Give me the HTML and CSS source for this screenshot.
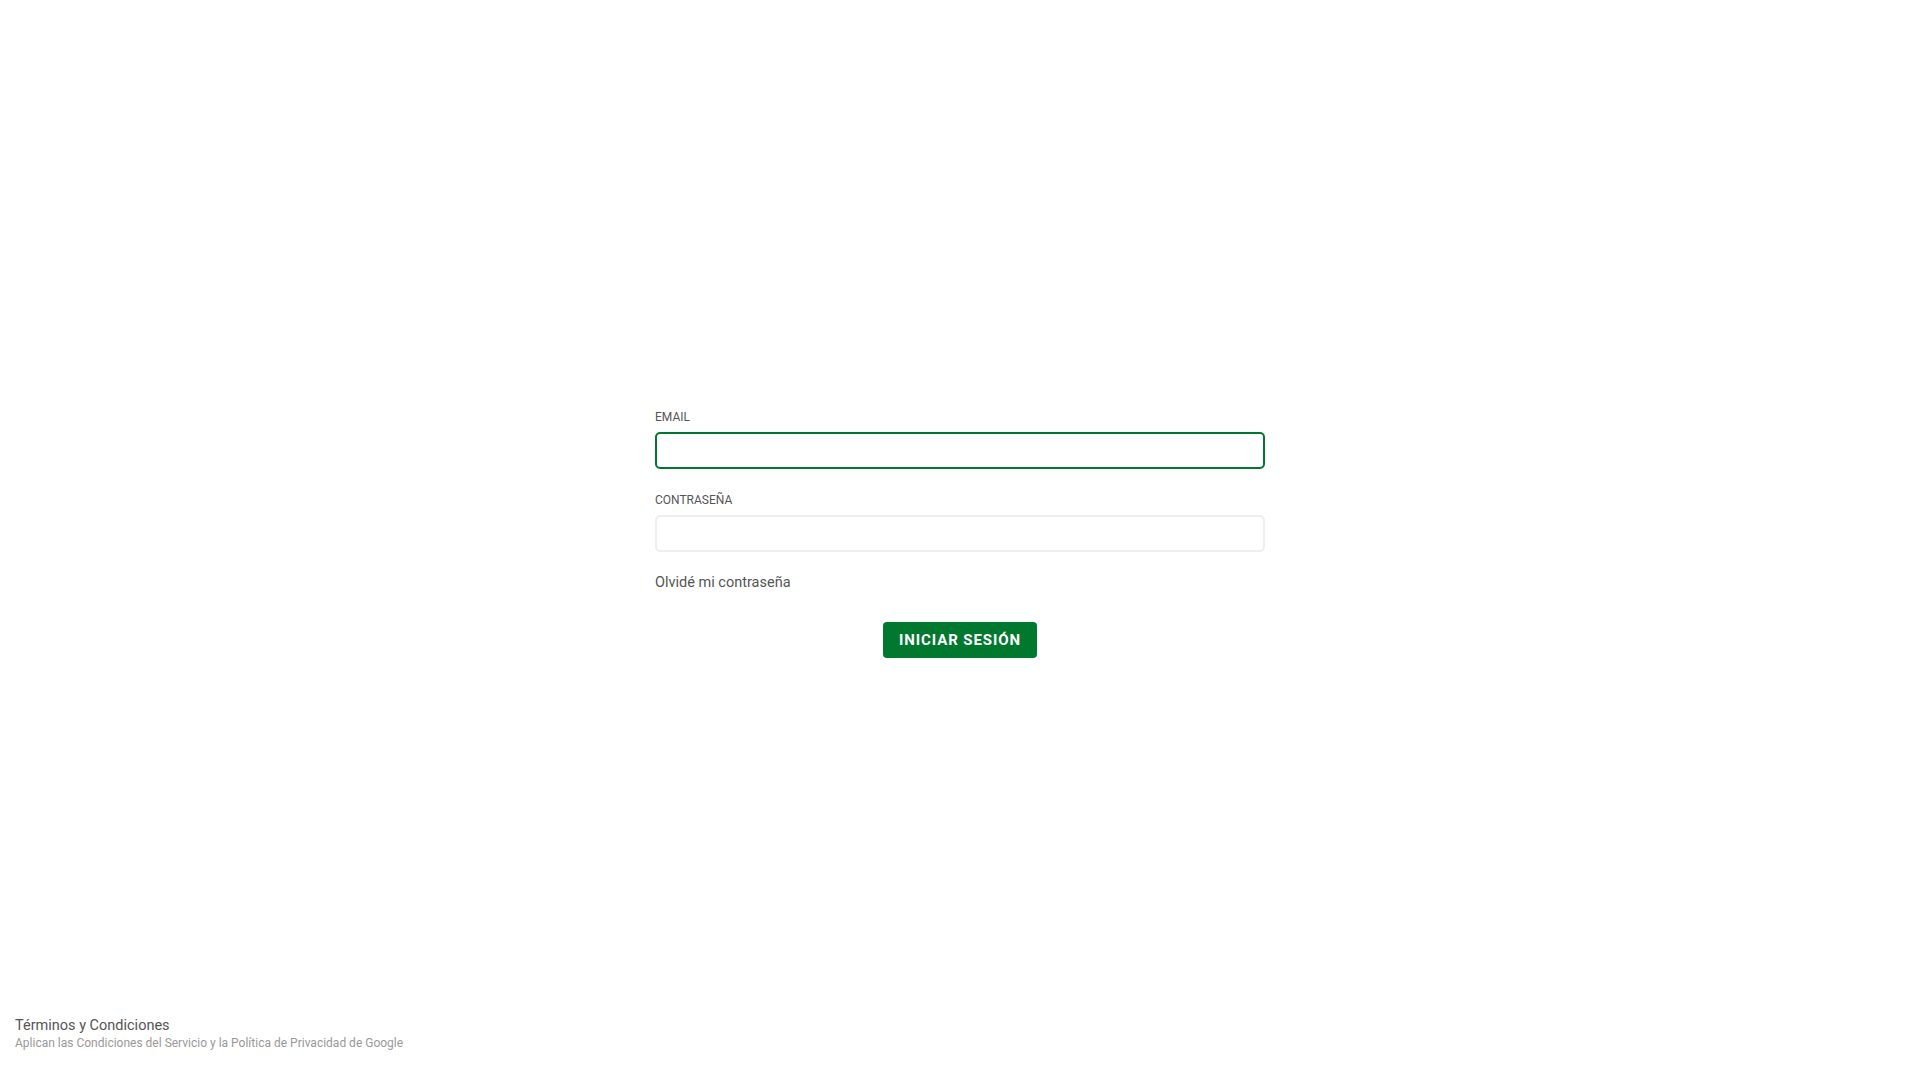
FILE: index.html
```html
<!DOCTYPE html>
<html lang="es">
<head>
<meta charset="utf-8">
<title>Iniciar sesión</title>
<link rel="stylesheet" href="styles.css">
</head>
<body>
<div class="page">
  <main class="main">
    <form class="login">
      <div class="field">
        <label class="label" for="email">EMAIL</label>
        <input class="input input-focus" id="email" type="email">
      </div>
      <div class="field">
        <label class="label" for="pass">CONTRASEÑA</label>
        <input class="input" id="pass" type="password">
      </div>
      <a class="forgot" href="#">Olvidé mi contraseña</a>
      <div class="actions">
        <button class="btn" type="button">INICIAR SESIÓN</button>
      </div>
    </form>
  </main>
  <footer class="footer">
    <a class="terms" href="#">Términos y Condiciones</a>
    <p class="legal">Aplican las Condiciones del Servicio y la Política de Privacidad de Google</p>
  </footer>
</div>
</body>
</html>
```

FILE: styles.css
```css
html, body {
  margin: 0;
  padding: 0;
  background: #ffffff;
}
body {
  font-family: Roboto, "Noto Sans", sans-serif;
  color: #555555;
}
.page {
  min-height: 100vh;
  display: flex;
  flex-direction: column;
}
.main {
  flex: 1;
  display: flex;
  justify-content: center;
  padding-top: 410px;
}
.login {
  width: 610px;
  display: flex;
  flex-direction: column;
}
.field {
  display: flex;
  flex-direction: column;
  margin-bottom: 24px;
}
.field + .field {
  margin-bottom: 22px;
}
.label {
  font-size: 12px;
  line-height: 14px;
  color: #555555;
  margin-bottom: 8px;
}
.input {
  box-sizing: border-box;
  width: 100%;
  height: 37px;
  margin: 0;
  border: 2px solid #eeeeee;
  border-radius: 5px;
  background: #ffffff;
  outline: none;
  padding: 0 10px;
  font-family: inherit;
  font-size: 14px;
}
.input-focus {
  border-color: #00762f;
}
.forgot {
  align-self: flex-start;
  font-size: 14.5px;
  line-height: 17px;
  color: #555555;
  text-decoration: none;
}
.actions {
  display: flex;
  justify-content: center;
  margin-top: 31px;
}
.btn {
  box-sizing: border-box;
  width: 154px;
  height: 36px;
  border: none;
  border-radius: 4px;
  background: #00782e;
  color: #ffffff;
  font-family: inherit;
  font-size: 15px;
  font-weight: 700;
  letter-spacing: 0.9px;
  cursor: pointer;
  padding: 0;
}
.footer {
  padding: 0 15px 30px;
  display: flex;
  flex-direction: column;
}
.terms {
  font-size: 14.5px;
  line-height: 17px;
  color: #555555;
  text-decoration: none;
  align-self: flex-start;
}
.legal {
  margin: 2px 0 0;
  font-size: 12px;
  line-height: 14px;
  color: #999999;
}
```
